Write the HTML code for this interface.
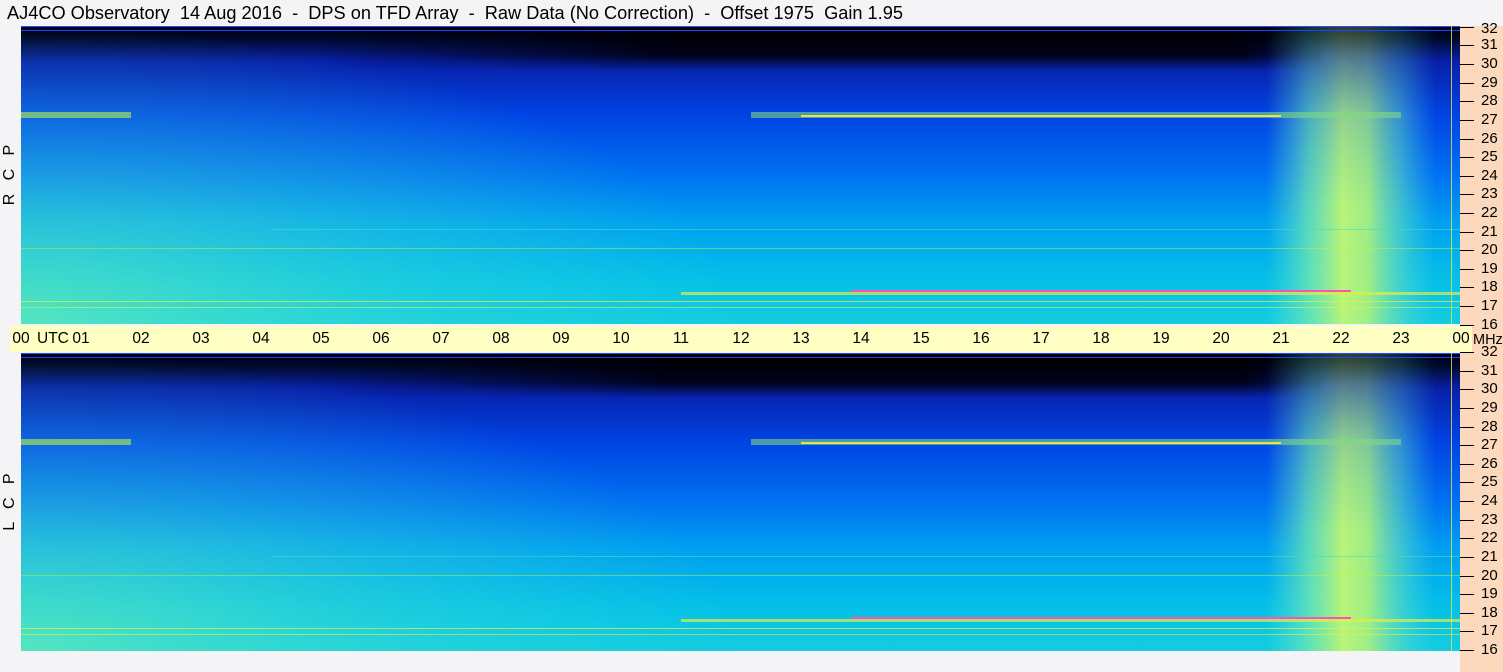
<!DOCTYPE html>
<html><head><meta charset="utf-8"><style>
html,body{margin:0;padding:0;background:#f4f4f6;}
body{width:1503px;height:672px;position:relative;overflow:hidden;font-family:"Liberation Sans",sans-serif;color:#000;}
.title{position:absolute;left:7px;top:2px;font-size:18.2px;white-space:pre;line-height:22px;}
.pan{position:absolute;left:21px;width:1439px;}
.right{position:absolute;left:1460px;top:26px;width:43px;height:646px;background:#fcd8bc;}
.band{position:absolute;left:10px;top:326px;width:1462px;height:26px;background:#ffffc4;}
.r{position:absolute;left:1481px;font-size:15px;line-height:16px;}
.rt{position:absolute;left:1460px;width:14px;height:1px;background:#000;}
.t{position:absolute;top:330px;font-size:15.5px;line-height:18px;width:30px;margin-left:-15px;text-align:center;}
.side{position:absolute;font-size:16px;transform:rotate(-90deg);transform-origin:center;white-space:pre;width:120px;text-align:center;line-height:20px;}
</style></head><body>
<div class="title">AJ4CO Observatory  14 Aug 2016  -  DPS on TFD Array  -  Raw Data (No Correction)  -  Offset 1975  Gain 1.95</div>
<div class="right"></div>
<svg width="0" height="0" style="position:absolute">
<defs>
<linearGradient id="v" x1="0" y1="0" x2="0" y2="1">
<stop offset="0" stop-color="#000010"/><stop offset="0.04" stop-color="#000828"/><stop offset="0.12" stop-color="#0820a8"/><stop offset="0.3" stop-color="#0044e4"/><stop offset="0.5" stop-color="#0072f0"/><stop offset="0.65" stop-color="#009ef0"/><stop offset="0.85" stop-color="#04c0e8"/><stop offset="1" stop-color="#14cce0"/></linearGradient>
<radialGradient id="l" cx="0" cy="1" r="1" gradientTransform="scale(0.5,1)"><stop offset="0" stop-color="#70f0b0" stop-opacity="0.7"/><stop offset="0.6" stop-color="#40e0d0" stop-opacity="0.3"/><stop offset="1" stop-color="#40e0d0" stop-opacity="0"/></radialGradient>
<linearGradient id="d" x1="0" y1="0" x2="0" y2="1"><stop offset="0" stop-color="#000" stop-opacity="1"/><stop offset="0.65" stop-color="#000010" stop-opacity="0.9"/><stop offset="1" stop-color="#000" stop-opacity="0"/></linearGradient>
<linearGradient id="dh" x1="0" y1="0" x2="1" y2="0"><stop offset="0" stop-color="#fff" stop-opacity="0"/><stop offset="0.35" stop-color="#fff" stop-opacity="1"/><stop offset="0.92" stop-color="#fff" stop-opacity="1"/><stop offset="1" stop-color="#fff" stop-opacity="0.2"/></linearGradient>
<mask id="dm" maskContentUnits="userSpaceOnUse"><rect x="300" y="0" width="1000" height="45" fill="url(#dh)"/></mask>
<linearGradient id="b" x1="0" y1="0" x2="1" y2="0"><stop offset="0" stop-color="#60e0d0" stop-opacity="0"/><stop offset="0.25" stop-color="#70e8b0" stop-opacity="0.8"/><stop offset="0.45" stop-color="#b8f478" stop-opacity="1"/><stop offset="0.6" stop-color="#a8f080" stop-opacity="0.95"/><stop offset="0.8" stop-color="#60dcc0" stop-opacity="0.6"/><stop offset="1" stop-color="#40d0e0" stop-opacity="0"/></linearGradient>
<linearGradient id="bv" x1="0" y1="0" x2="0" y2="1"><stop offset="0" stop-color="#fff" stop-opacity="0.25"/><stop offset="0.3" stop-color="#fff" stop-opacity="0.8"/><stop offset="0.6" stop-color="#fff" stop-opacity="1"/></linearGradient>
<mask id="bm" maskContentUnits="userSpaceOnUse"><rect x="1240" y="0" width="200" height="298" fill="url(#bv)"/></mask>
<g id="spec">
<rect width="1439" height="298" fill="url(#v)"/>
<rect width="1439" height="298" fill="url(#l)"/>
<rect x="300" y="0" width="1000" height="45" fill="url(#d)" mask="url(#dm)"/>
<rect x="1245" y="0" width="170" height="298" fill="url(#b)" mask="url(#bm)"/>
<rect x="0" y="86" width="110" height="6" fill="#a0e060" opacity="0.7"/>
<rect x="730" y="86" width="650" height="6" fill="#80d880" opacity="0.6"/>
<rect x="780" y="89" width="480" height="2" fill="#f0f040" opacity="0.9"/>
<rect x="0" y="4" width="1439" height="1" fill="#2040ff"/>
<rect x="0" y="0" width="1439" height="1" fill="#2050ff"/>
<rect x="250" y="203" width="1189" height="1" fill="#40e0c0" opacity="0.6"/>
<rect x="0" y="222" width="1439" height="1" fill="#c0f040" opacity="0.5"/>
<rect x="830" y="264" width="500" height="2" fill="#ff50c0"/>
<rect x="660" y="266" width="780" height="3" fill="#e0f040" opacity="0.7"/>
<rect x="0" y="275" width="1439" height="1" fill="#e8f040" opacity="0.7"/>
<rect x="0" y="281" width="1439" height="1" fill="#e8f040" opacity="0.6"/>
<rect x="1430" y="0" width="1" height="298" fill="#f0e040" opacity="0.8"/>
</g></defs></svg>
<svg class="pan" style="top:26px" width="1439" height="299"><use href="#spec"/></svg>
<svg class="pan" style="top:353px" width="1439" height="298"><use href="#spec"/></svg>
<div class="band"></div>
<div class="side" style="top:165px;left:-50px">R   C   P</div>
<div class="side" style="top:492px;left:-50px">L   C   P</div>

<div class="rt" style="top:27px"></div><div class="r" style="top:21px">32</div>
<div class="rt" style="top:45px"></div><div class="r" style="top:37px">31</div>
<div class="rt" style="top:64px"></div><div class="r" style="top:56px">30</div>
<div class="rt" style="top:83px"></div><div class="r" style="top:75px">29</div>
<div class="rt" style="top:101px"></div><div class="r" style="top:93px">28</div>
<div class="rt" style="top:120px"></div><div class="r" style="top:112px">27</div>
<div class="rt" style="top:139px"></div><div class="r" style="top:131px">26</div>
<div class="rt" style="top:157px"></div><div class="r" style="top:149px">25</div>
<div class="rt" style="top:176px"></div><div class="r" style="top:168px">24</div>
<div class="rt" style="top:194px"></div><div class="r" style="top:186px">23</div>
<div class="rt" style="top:213px"></div><div class="r" style="top:205px">22</div>
<div class="rt" style="top:232px"></div><div class="r" style="top:224px">21</div>
<div class="rt" style="top:250px"></div><div class="r" style="top:242px">20</div>
<div class="rt" style="top:269px"></div><div class="r" style="top:261px">19</div>
<div class="rt" style="top:287px"></div><div class="r" style="top:279px">18</div>
<div class="rt" style="top:306px"></div><div class="r" style="top:298px">17</div>
<div class="rt" style="top:325px"></div><div class="r" style="top:317px">16</div>

<div class="rt" style="top:352px"></div><div class="r" style="top:344px">32</div>
<div class="rt" style="top:371px"></div><div class="r" style="top:363px">31</div>
<div class="rt" style="top:389px"></div><div class="r" style="top:381px">30</div>
<div class="rt" style="top:408px"></div><div class="r" style="top:400px">29</div>
<div class="rt" style="top:427px"></div><div class="r" style="top:419px">28</div>
<div class="rt" style="top:445px"></div><div class="r" style="top:437px">27</div>
<div class="rt" style="top:464px"></div><div class="r" style="top:456px">26</div>
<div class="rt" style="top:482px"></div><div class="r" style="top:474px">25</div>
<div class="rt" style="top:501px"></div><div class="r" style="top:493px">24</div>
<div class="rt" style="top:520px"></div><div class="r" style="top:512px">23</div>
<div class="rt" style="top:538px"></div><div class="r" style="top:530px">22</div>
<div class="rt" style="top:557px"></div><div class="r" style="top:549px">21</div>
<div class="rt" style="top:576px"></div><div class="r" style="top:568px">20</div>
<div class="rt" style="top:594px"></div><div class="r" style="top:586px">19</div>
<div class="rt" style="top:613px"></div><div class="r" style="top:605px">18</div>
<div class="rt" style="top:631px"></div><div class="r" style="top:623px">17</div>
<div class="rt" style="top:650px"></div><div class="r" style="top:642px">16</div>

<div class="t" style="left:21px">00</div><div style="position:absolute;left:37px;top:330px;font-size:15.5px;line-height:18px">UTC</div>
<div class="t" style="left:81px">01</div><div class="t" style="left:141px">02</div><div class="t" style="left:201px">03</div><div class="t" style="left:261px">04</div><div class="t" style="left:321px">05</div><div class="t" style="left:381px">06</div><div class="t" style="left:441px">07</div><div class="t" style="left:501px">08</div><div class="t" style="left:561px">09</div><div class="t" style="left:621px">10</div><div class="t" style="left:681px">11</div><div class="t" style="left:741px">12</div><div class="t" style="left:801px">13</div><div class="t" style="left:861px">14</div><div class="t" style="left:921px">15</div><div class="t" style="left:981px">16</div><div class="t" style="left:1041px">17</div><div class="t" style="left:1101px">18</div><div class="t" style="left:1161px">19</div><div class="t" style="left:1221px">20</div><div class="t" style="left:1281px">21</div><div class="t" style="left:1341px">22</div><div class="t" style="left:1401px">23</div><div class="t" style="left:1461px">00</div>
<div style="position:absolute;left:1473px;top:331px;font-size:14.5px;line-height:18px">MHz</div>
</body></html>
